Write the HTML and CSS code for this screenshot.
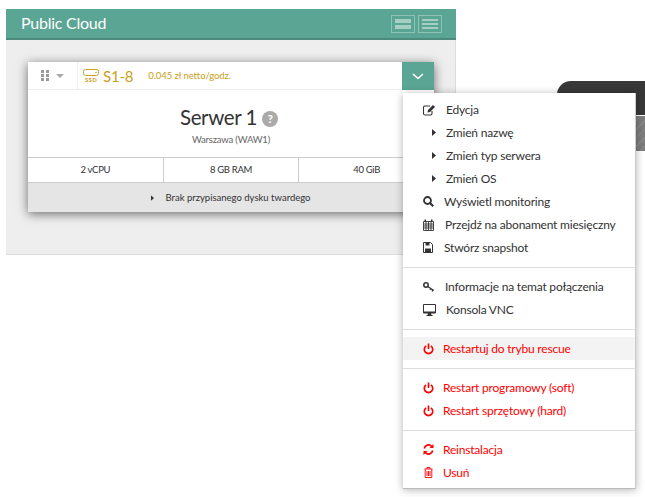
FILE: index.html
```html
<!DOCTYPE html>
<html lang="pl">
<head>
    <meta charset="UTF-8">
    <title>Public Cloud</title>
    <link rel="stylesheet" href="styles.css">
</head>
<body>
    <svg class="defs" width="0" height="0">
        <symbol id="i-power" viewBox="0 0 12 12">
            <path d="M3.4 2.6a4.6 4.6 0 1 0 5.2 0" fill="none" stroke="currentColor" stroke-width="1.8"/>
            <rect x="5.1" y="0" width="1.8" height="6" fill="currentColor"/>
        </symbol>
        <symbol id="i-arrow" viewBox="0 0 4 7">
            <path d="M0 0l4 3.5L0 7z" fill="currentColor"/>
        </symbol>
    </svg>

    <div class="side-dark"></div>
    <div class="side-hatch"></div>

    <div class="panel">
        <div class="panel-head">
            <h1>Public Cloud</h1>
            <div class="view-btns">
                <div class="view-btn view-two"><span></span><span></span></div>
                <div class="view-btn view-three"><span></span><span></span><span></span></div>
            </div>
        </div>
        <div class="panel-body">
            <div class="card">
                <div class="card-top">
                    <div class="drag">
                        <svg width="8" height="11" viewBox="0 0 8 11" fill="#9a9a9a">
                            <rect x="0" y="0" width="3" height="3"/><rect x="5" y="0" width="3" height="3"/>
                            <rect x="0" y="4" width="3" height="3"/><rect x="5" y="4" width="3" height="3"/>
                            <rect x="0" y="8" width="3" height="3"/><rect x="5" y="8" width="3" height="3"/>
                        </svg>
                        <span class="caret"></span>
                    </div>
                    <div class="plan">
                        <div class="ssd">
                            <svg width="16" height="7" viewBox="0 0 16 7">
                                <rect x="0.5" y="0.5" width="15" height="6" rx="2" fill="none" stroke="#cda22a"/>
                                <circle cx="13" cy="3.5" r="0.8" fill="#cda22a"/>
                            </svg>
                            <span>SSD</span>
                        </div>
                        <span class="plan-name">S1-8</span>
                        <span class="plan-price">0.045 zł netto/godz.</span>
                    </div>
                    <div class="toggle">
                        <svg width="12" height="7" viewBox="0 0 12 7">
                            <path d="M1 1l5 4.5L11 1" fill="none" stroke="#fff" stroke-width="1.6"/>
                        </svg>
                    </div>
                </div>
                <div class="card-main">
                    <div class="srv-title">Serwer 1 <span class="help">?</span></div>
                    <div class="srv-loc">Warszawa (WAW1)</div>
                </div>
                <div class="specs">
                    <div>2 vCPU</div>
                    <div>8 GB RAM</div>
                    <div>40 GiB</div>
                </div>
                <div class="disk">
                    <svg class="ic-arrow" width="3" height="6"><use href="#i-arrow"/></svg>
                    Brak przypisanego dysku twardego
                </div>
            </div>
        </div>
    </div>

    <div class="menu">
        <div class="group group-first">
            <div class="row">
                <svg class="ic" width="13" height="12" viewBox="0 0 13 12">
                    <path d="M9 7v2.500a1.500 1.500 0 0 1-1.500 1.500h-5.500a1.500 1.500 0 0 1-1.500-1.500v-6a1.500 1.500 0 0 1 1.500-1.500h5" fill="none" stroke="currentColor" stroke-width="1.100"/>
                    <path d="M4.500 8.500l.5-2.500 5-5 2 2-5 5z" fill="currentColor"/>
                </svg>
                Edycja
            </div>
            <div class="row"><svg class="ic-sub" width="4" height="7"><use href="#i-arrow"/></svg>Zmień nazwę</div>
            <div class="row"><svg class="ic-sub" width="4" height="7"><use href="#i-arrow"/></svg>Zmień typ serwera</div>
            <div class="row"><svg class="ic-sub" width="4" height="7"><use href="#i-arrow"/></svg>Zmień OS</div>
            <div class="row">
                <svg class="ic" width="11" height="11" viewBox="0 0 11 11">
                    <circle cx="4.500" cy="4.500" r="3.500" fill="none" stroke="currentColor" stroke-width="1.800"/>
                    <path d="M7 7l3.200 3.200" stroke="currentColor" stroke-width="2.200"/>
                </svg>
                Wyświetl monitoring
            </div>
            <div class="row">
                <svg class="ic ic-wide" width="11" height="12" viewBox="0 0 11 12">
                    <path d="M.5 2.500h10v9h-10zM.5 5h10M.5 7h10M.5 9h10M3 2.500v9M5.500 2.500v9M8 2.500v9" fill="none" stroke="currentColor" stroke-width=".9"/>
                    <path d="M2.300 .5v2.500M8.700 .5v2.500" stroke="currentColor" stroke-width="1.500"/>
                </svg>
                Przejdź na abonament miesięczny
            </div>
            <div class="row">
                <svg class="ic ic-narrow" width="10" height="11" viewBox="0 0 10 11">
                    <path d="M.5 .5h7l2 2v8h-9z" fill="none" stroke="currentColor"/>
                    <path d="M2.500 .5h4v3h-4zM2 6.500h6v4h-6z" fill="currentColor"/>
                </svg>
                Stwórz snapshot
            </div>
        </div>
        <div class="group">
            <div class="row">
                <svg class="ic" width="12" height="10" viewBox="0 0 12 10">
                    <circle cx="3" cy="3" r="2.200" fill="none" stroke="currentColor" stroke-width="1.500"/>
                    <path d="M4.800 4.500l6 4M8 6.500l-1 1.500M10 7.800l-1 1.500" fill="none" stroke="currentColor" stroke-width="1.300"/>
                </svg>
                Informacje na temat połączenia
            </div>
            <div class="row">
                <svg class="ic" width="13" height="12" viewBox="0 0 13 12">
                    <path d="M1 0h11a1 1 0 0 1 1 1v7.500a1 1 0 0 1-1 1h-4l.5 1.500h1v1h-6v-1h1l.5-1.500h-4a1 1 0 0 1-1-1v-7.500a1 1 0 0 1 1-1zM1 1v6.500h11v-6.500z" fill="currentColor" fill-rule="evenodd"/>
                </svg>
                Konsola VNC
            </div>
        </div>
        <div class="group red">
            <div class="row row-hover"><svg class="ic ic-pw" width="11" height="12"><use href="#i-power"/></svg>Restartuj do trybu rescue</div>
        </div>
        <div class="group red">
            <div class="row"><svg class="ic ic-pw" width="11" height="12"><use href="#i-power"/></svg>Restart programowy (soft)</div>
            <div class="row"><svg class="ic ic-pw" width="11" height="12"><use href="#i-power"/></svg>Restart sprzętowy (hard)</div>
        </div>
        <div class="group group-last red">
            <div class="row">
                <svg class="ic ic-pw" width="11" height="11" viewBox="0 0 11 11">
                    <path d="M1.300 4.500a4.300 4.300 0 0 1 7.300-2.200" fill="none" stroke="currentColor" stroke-width="1.700"/>
                    <path d="M10.500 0v4h-4z" fill="currentColor"/>
                    <path d="M9.700 6.500a4.300 4.300 0 0 1-7.300 2.200" fill="none" stroke="currentColor" stroke-width="1.700"/>
                    <path d="M.5 11v-4h4z" fill="currentColor"/>
                </svg>
                Reinstalacja
            </div>
            <div class="row">
                <svg class="ic ic-trash" width="9" height="11" viewBox="0 0 9 11">
                    <path d="M.5 2h8M3 2v-1.500h3v1.500M1.200 2v8.500h6.600v-8.500M3 4v5M4.500 4v5M6 4v5" fill="none" stroke="currentColor" stroke-width=".9"/>
                </svg>
                Usuń
            </div>
        </div>
    </div>
</body>
</html>
```

FILE: styles.css
```css
body {
    margin: 0;
    height: 497px;
    overflow: hidden;
    position: relative;
    background-color: #fff;
    color: #333;
    font-family: "Lato", "Open Sans", sans-serif;
    font-size: 12px;
}
.defs {
    position: absolute;
}
.side-dark {
    position: absolute;
    left: 557px;
    top: 81px;
    right: 0;
    height: 34px;
    background-color: #383838;
    border-top-left-radius: 14px;
}
.side-hatch {
    position: absolute;
    left: 557px;
    top: 116px;
    right: 0;
    height: 35px;
    background: repeating-linear-gradient(135deg, #7d7d7d 0, #7d7d7d 5px, #8a8a8a 5px, #8a8a8a 6px);
}
.panel {
    margin: 9px 0 0 6px;
    width: 450px;
}
.panel-head {
    height: 29px;
    background-color: #5aa593;
    border-bottom: 2px solid #4c8a7b;
    display: flex;
    justify-content: space-between;
    align-items: center;
    padding: 0 14px 0 15px;
}
.panel-head h1 {
    margin: 0 0 2px;
    font-size: 16px;
    font-weight: 400;
    letter-spacing: -0.25px;
    color: #fff;
}
.view-btns {
    display: flex;
    gap: 3px;
}
.view-btn {
    width: 22px;
    height: 16px;
    border: 1px solid #8fc2b5;
    display: flex;
    flex-direction: column;
    justify-content: center;
    align-items: center;
    gap: 2px;
}
.view-btn span {
    display: block;
    width: 16px;
    background-color: #a6cfc4;
}
.view-two span {
    height: 4px;
}
.view-three span {
    height: 2px;
}
.panel-body {
    height: 172px;
    padding: 22px 21px 20px 22px;
    background-color: #eee;
    border-right: 1px solid #ddd;
    border-bottom: 1px solid #ddd;
}
.card {
    width: 406px;
    background-color: #fff;
    box-shadow: 0 2px 10px rgba(0, 0, 0, 0.55);
}
.card-top {
    height: 27px;
    display: flex;
    align-items: stretch;
    border-bottom: 1px solid #eee;
}
.drag {
    width: 50px;
    box-sizing: border-box;
    border-right: 1px solid #eee;
    display: flex;
    align-items: center;
    padding-left: 13px;
    gap: 7px;
}
.caret {
    width: 0;
    height: 0;
    border-left: 4px solid transparent;
    border-right: 4px solid transparent;
    border-top: 4px solid #aaa;
}
.plan {
    flex: 1;
    display: flex;
    align-items: center;
    padding-left: 5px;
    color: #c9a020;
}
.ssd {
    width: 16px;
    display: flex;
    flex-direction: column;
    align-items: center;
    gap: 1px;
    font-size: 6px;
    font-weight: 700;
    letter-spacing: 0.3px;
    line-height: 6px;
}
.ssd svg {
    display: block;
}
.plan-name {
    font-size: 15px;
    letter-spacing: -0.2px;
    margin-left: 4px;
}
.plan-price {
    font-size: 9.500px;
    letter-spacing: -0.1px;
    margin-left: 15px;
}
.toggle {
    width: 32px;
    height: 28px;
    background-color: #5aa593;
    display: flex;
    align-items: center;
    justify-content: center;
}
.card-main {
    height: 67px;
    text-align: center;
}
.srv-title {
    padding: 13px 4px 0 0;
    font-size: 20.500px;
    letter-spacing: -0.4px;
    line-height: 28px;
}
.help {
    display: inline-block;
    width: 16px;
    height: 16px;
    border-radius: 50%;
    background-color: #aaa;
    color: #fff;
    font-size: 12px;
    font-weight: 700;
    line-height: 16px;
    vertical-align: 2px;
}
.srv-loc {
    font-size: 9.500px;
    letter-spacing: -0.2px;
    line-height: 14px;
    color: #666;
    margin-top: 2px;
}
.specs {
    display: flex;
    border-top: 1px solid #ccc;
    border-bottom: 1px solid #ccc;
    height: 24px;
}
.specs div {
    flex: 1;
    text-align: center;
    font-size: 9.500px;
    letter-spacing: -0.3px;
    line-height: 24px;
    border-right: 1px solid #ccc;
}
.specs div:last-child {
    border-right: none;
}
.disk {
    height: 29px;
    background-color: #e5e5e5;
    display: flex;
    align-items: center;
    justify-content: center;
    font-size: 9.500px;
}
.ic-arrow {
    margin-right: 11px;
    color: #333;
}
.menu {
    position: absolute;
    left: 403px;
    top: 93px;
    width: 232px;
    background-color: #fff;
    border-right: 1px solid #ccc;
    border-bottom: 1px solid #bbb;
    box-shadow: 0 1px 8px rgba(0, 0, 0, 0.3);
    font-size: 12px;
    letter-spacing: -0.2px;
}
.group {
    padding: 7px 0 8px;
    border-bottom: 1px solid #ddd;
}
.group-first {
    padding: 5px 0 8px;
}
.group-last {
    padding-bottom: 4px;
    border-bottom: none;
}
.red {
    color: #f00;
}
.row {
    height: 23px;
    display: flex;
    align-items: center;
    padding-left: 20px;
}
.row-hover {
    background-color: #f3f3f3;
}
.ic {
    margin-right: 10px;
    flex-shrink: 0;
}
.ic-wide {
    margin-right: 11px;
}
.ic-narrow {
    margin-right: 11px;
}
.ic-pw {
    margin-right: 9px;
}
.ic-trash {
    margin-left: 1px;
    margin-right: 10px;
}
.ic-sub {
    margin-left: 9px;
    margin-right: 10px;
    flex-shrink: 0;
}
```
